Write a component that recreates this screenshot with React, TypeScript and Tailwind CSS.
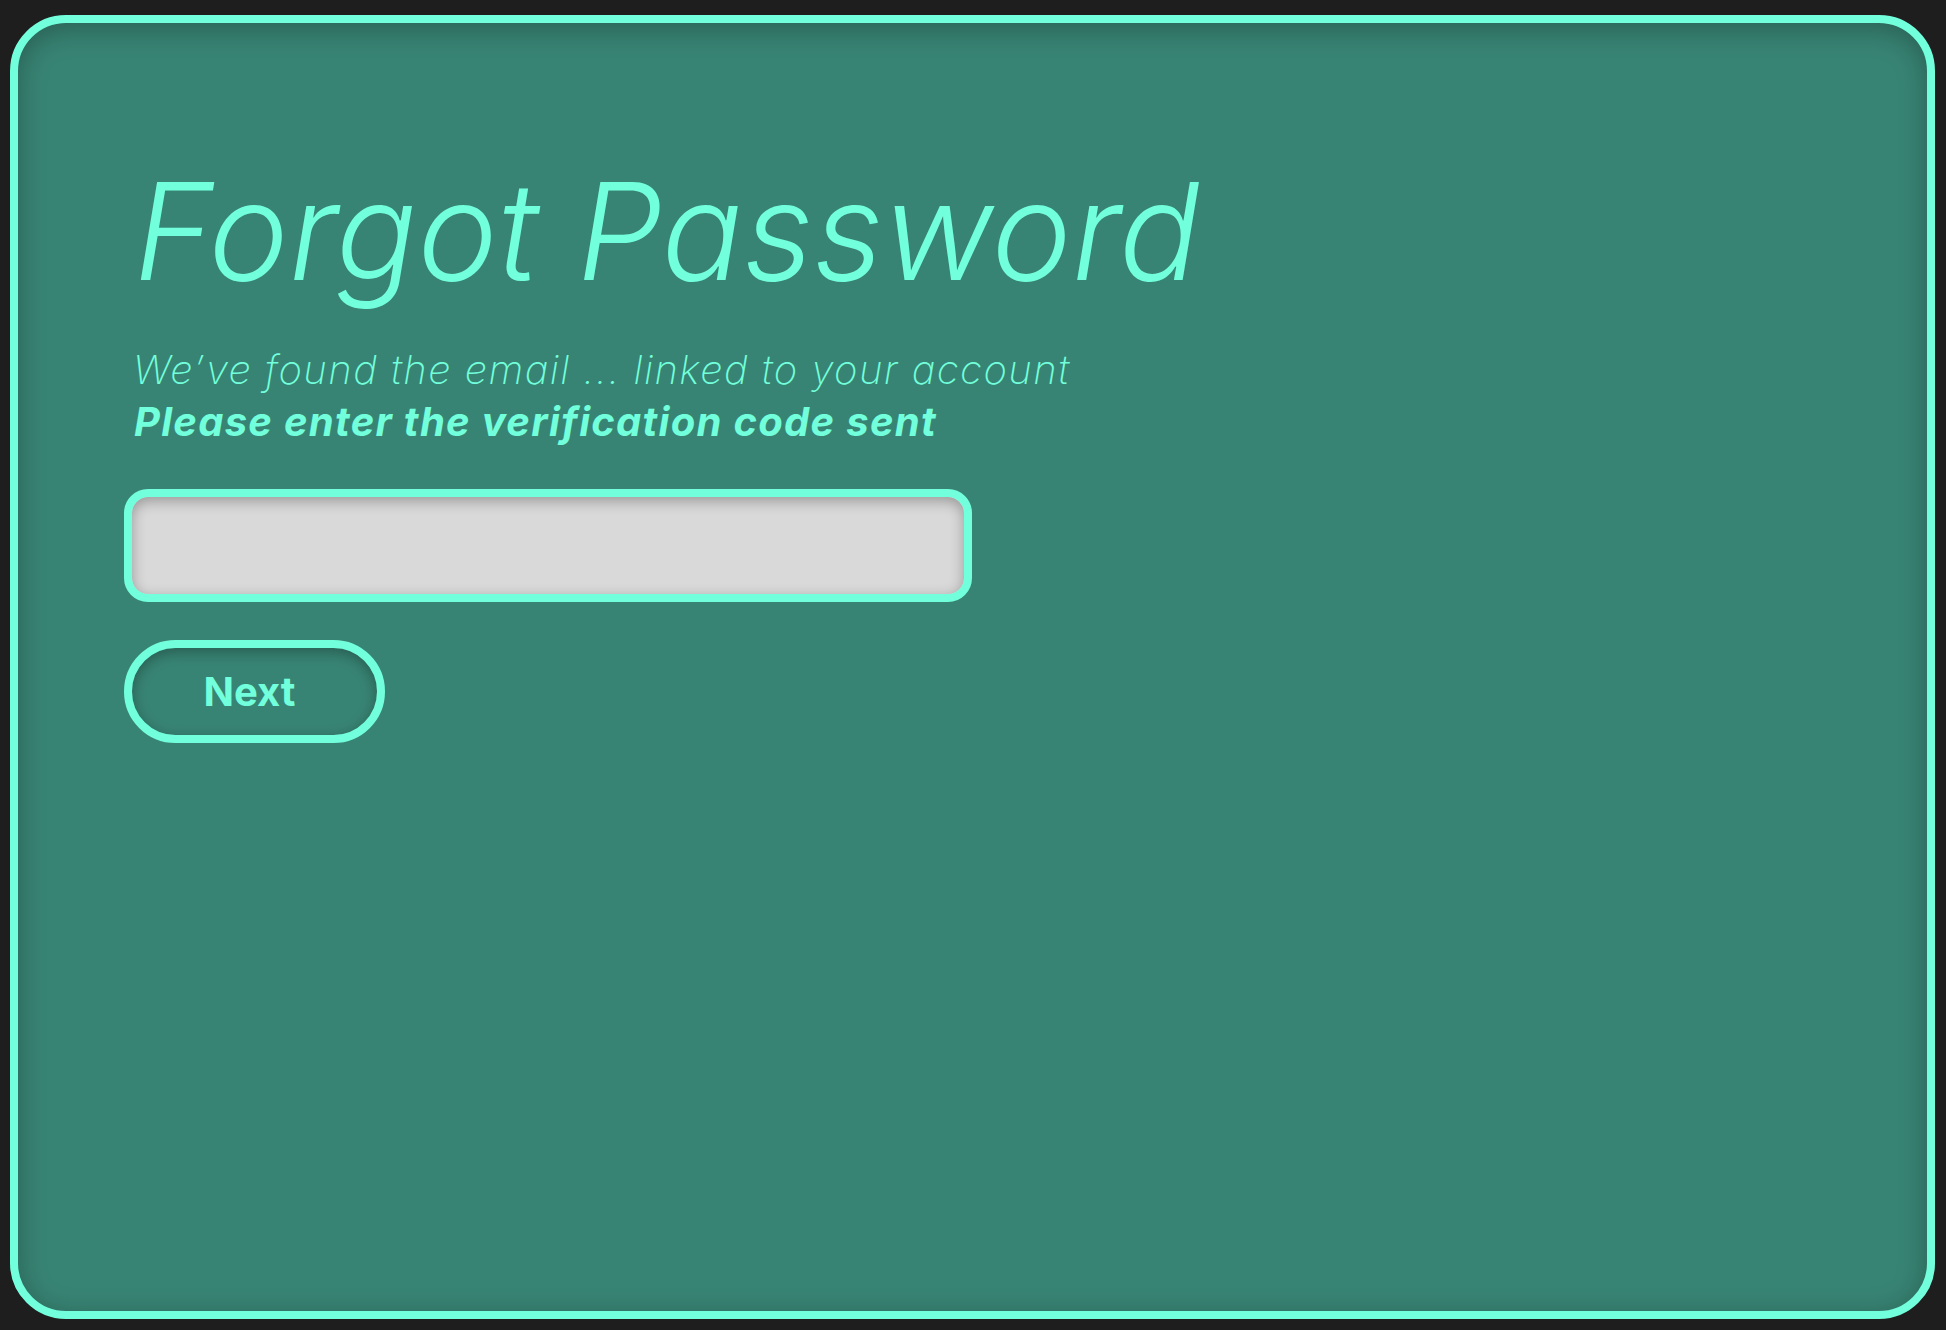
import { useState } from "react";

export default function App() {
  const [code, setCode] = useState("");

  return (
    <div className="min-h-screen w-full bg-[#1e1e1e] pt-[15px] pr-[11px] pb-[11px] pl-[10px] font-['Inter','Noto_Sans',sans-serif]">
      <div className="h-[1304px] w-[1925px] rounded-[56px] border-[8px] border-[#72ffdb] bg-[#388474] pl-[106px] pt-[141px] shadow-[inset_0_6px_28px_rgba(0,0,0,0.28)]">
        <h1 className="ml-[10px] text-[135px] font-light italic leading-none tracking-[0.003em] text-[#72ffdb]">
          Forgot Password
        </h1>
        <div className="ml-[9px] mt-[45px] text-[40px] leading-[52px] text-[#72ffdb]">
          <p className="font-extralight italic tracking-[0.036em]">We’ve found the email ... linked to your account</p>
          <p className="ml-[1px] font-bold italic tracking-[0.032em]">Please enter the verification code sent</p>
        </div>
        <input
          type="text"
          value={code}
          onChange={(e) => setCode(e.target.value)}
          aria-label="Verification code"
          className="mt-[41px] block h-[113px] w-[848px] rounded-[24px] border-[8px] border-[#72ffdb] bg-[#d9d9d9] px-6 text-[36px] text-[#1e1e1e] shadow-[inset_0_4px_14px_rgba(0,0,0,0.3)] outline-none"
        />
        <button
          type="button"
          className="mt-[38px] flex h-[103px] w-[261px] items-center justify-center rounded-full border-[8px] border-[#72ffdb] bg-[#388474] pr-[10px] text-[40px] font-bold text-[#72ffdb] shadow-[inset_0_4px_14px_rgba(0,0,0,0.3)]"
        >
          Next
        </button>
      </div>
    </div>
  );
}
